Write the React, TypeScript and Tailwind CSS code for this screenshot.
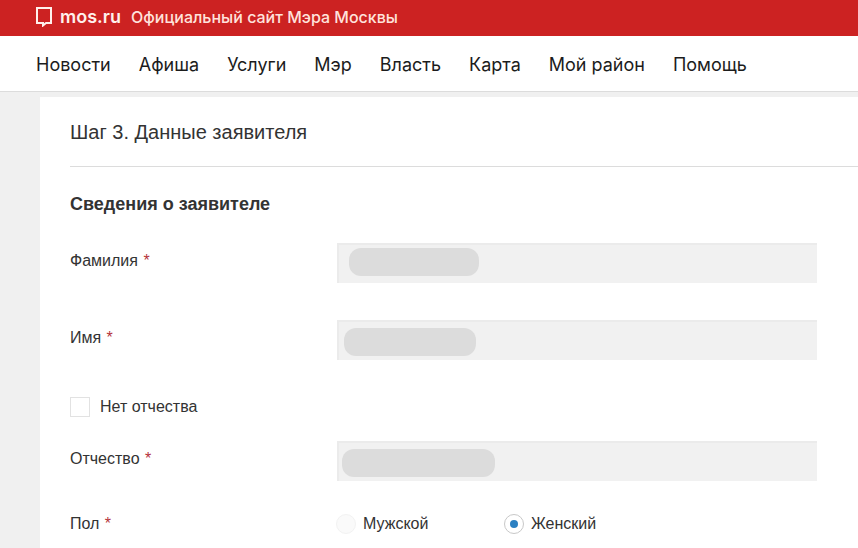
import cls from 'clsx';

const NAV_ITEMS = [
  'Новости',
  'Афиша',
  'Услуги',
  'Мэр',
  'Власть',
  'Карта',
  'Мой район',
  'Помощь',
];

const Logo = () => (
  <svg
    className="w-4 h-5 shrink-0"
    viewBox="0 0 16 20"
    fill="none"
    stroke="currentColor"
    strokeWidth="2"
    aria-hidden="true"
  >
    <path d="M1 1h14v15h-5l-3 2.5V16H1z" />
  </svg>
);

const Header = () => {
  return (
    <header className="font-['Inter','Noto_Sans',sans-serif]">
      <div className="flex items-center h-9 pl-9 pb-[3px] bg-[#cc2222] text-[#fff0ec]">
        <a href="#home" className="flex items-center gap-2">
          <Logo />
          <span className="text-lg leading-5 font-semibold">mos.ru</span>
        </a>
        <span className="ml-[10px] text-base leading-5 font-medium text-[#ffe2dc]">
          Официальный сайт Мэра Москвы
        </span>
      </div>
      <nav className="flex items-center gap-7 h-14 pl-9 pt-0.5 bg-white border-b border-[#dcdcdc] text-lg text-[#1c1c1c]">
        {NAV_ITEMS.map((item) => (
          <a key={item} href="#menu" className="whitespace-nowrap">
            {item}
          </a>
        ))}
      </nav>
    </header>
  );
};

const Required = () => <span className="ml-px text-[#b5333a]"> *</span>;

type TextFieldProps = {
  id: string;
  label: string;
  className?: string;
  maskClass: string;
};

const TextField = ({ id, label, className, maskClass }: TextFieldProps) => {
  return (
    <div className={cls('flex items-start', className)}>
      <label htmlFor={id} className="w-[267px] shrink-0 pt-2">
        {label}
        <Required />
      </label>
      <div className="relative flex-1">
        <input
          id={id}
          type="text"
          readOnly
          className="block w-full h-10 px-3 bg-[#f1f1f1] border-t-2 border-l-2 border-[#ebebeb] outline-none"
        />
        {/* скрытое значение */}
        <span
          className={cls('absolute h-7 rounded-xl bg-[#dcdcdc]', maskClass)}
        />
      </div>
    </div>
  );
};

type RadioProps = {
  label: string;
  value: string;
  defaultChecked?: boolean;
};

const Radio = ({ label, value, defaultChecked }: RadioProps) => (
  <label className="flex items-center gap-[7px] w-[168px]">
    <input
      type="radio"
      name="gender"
      value={value}
      defaultChecked={defaultChecked}
      className="appearance-none grid place-items-center w-5 h-5 rounded-full border border-[#f2f2f2] bg-[#fafafa] checked:border-[#c8c8c8] checked:bg-white before:w-2 before:h-2 before:rounded-full checked:before:bg-[#2b80c2]"
    />
    {label}
  </label>
);

const App = () => {
  return (
    <div className="min-h-screen flex flex-col bg-[#f0f0f0]">
      <Header />
      <main className="flex-1 mt-[5px] ml-10 pl-[30px] bg-white font-['Liberation_Sans',Arial,sans-serif] text-base leading-5 text-[#333333]">
        <h1 className="pt-[22px] pb-[21px] text-xl leading-[26px] border-b border-[#dcdcdc]">
          Шаг 3. Данные заявителя
        </h1>
        <form className="pr-[41px]">
          <h2 className="mt-[25px] text-lg leading-6 font-bold">
            Сведения о заявителе
          </h2>
          <TextField
            id="surname"
            label="Фамилия"
            className="mt-[27px]"
            maskClass="left-3 top-[5px] w-[130px]"
          />
          <TextField
            id="name"
            label="Имя"
            className="mt-[37px]"
            maskClass="left-[7px] top-2 w-[132px]"
          />
          <label className="flex items-center gap-[10px] w-fit mt-9 leading-[22px]">
            <input
              type="checkbox"
              className="appearance-none w-5 h-5 border border-[#e2e2e2] bg-white checked:bg-[#2b80c2]"
            />
            Нет отчества
          </label>
          <TextField
            id="patronymic"
            label="Отчество"
            className="mt-[23px]"
            maskClass="left-[5px] top-2 w-[153px]"
          />
          <fieldset className="flex mt-[33px]">
            <legend className="float-left w-[266px]">
              Пол
              <Required />
            </legend>
            <Radio label="Мужской" value="male" />
            <Radio label="Женский" value="female" defaultChecked />
          </fieldset>
        </form>
      </main>
    </div>
  );
};

export default App;
